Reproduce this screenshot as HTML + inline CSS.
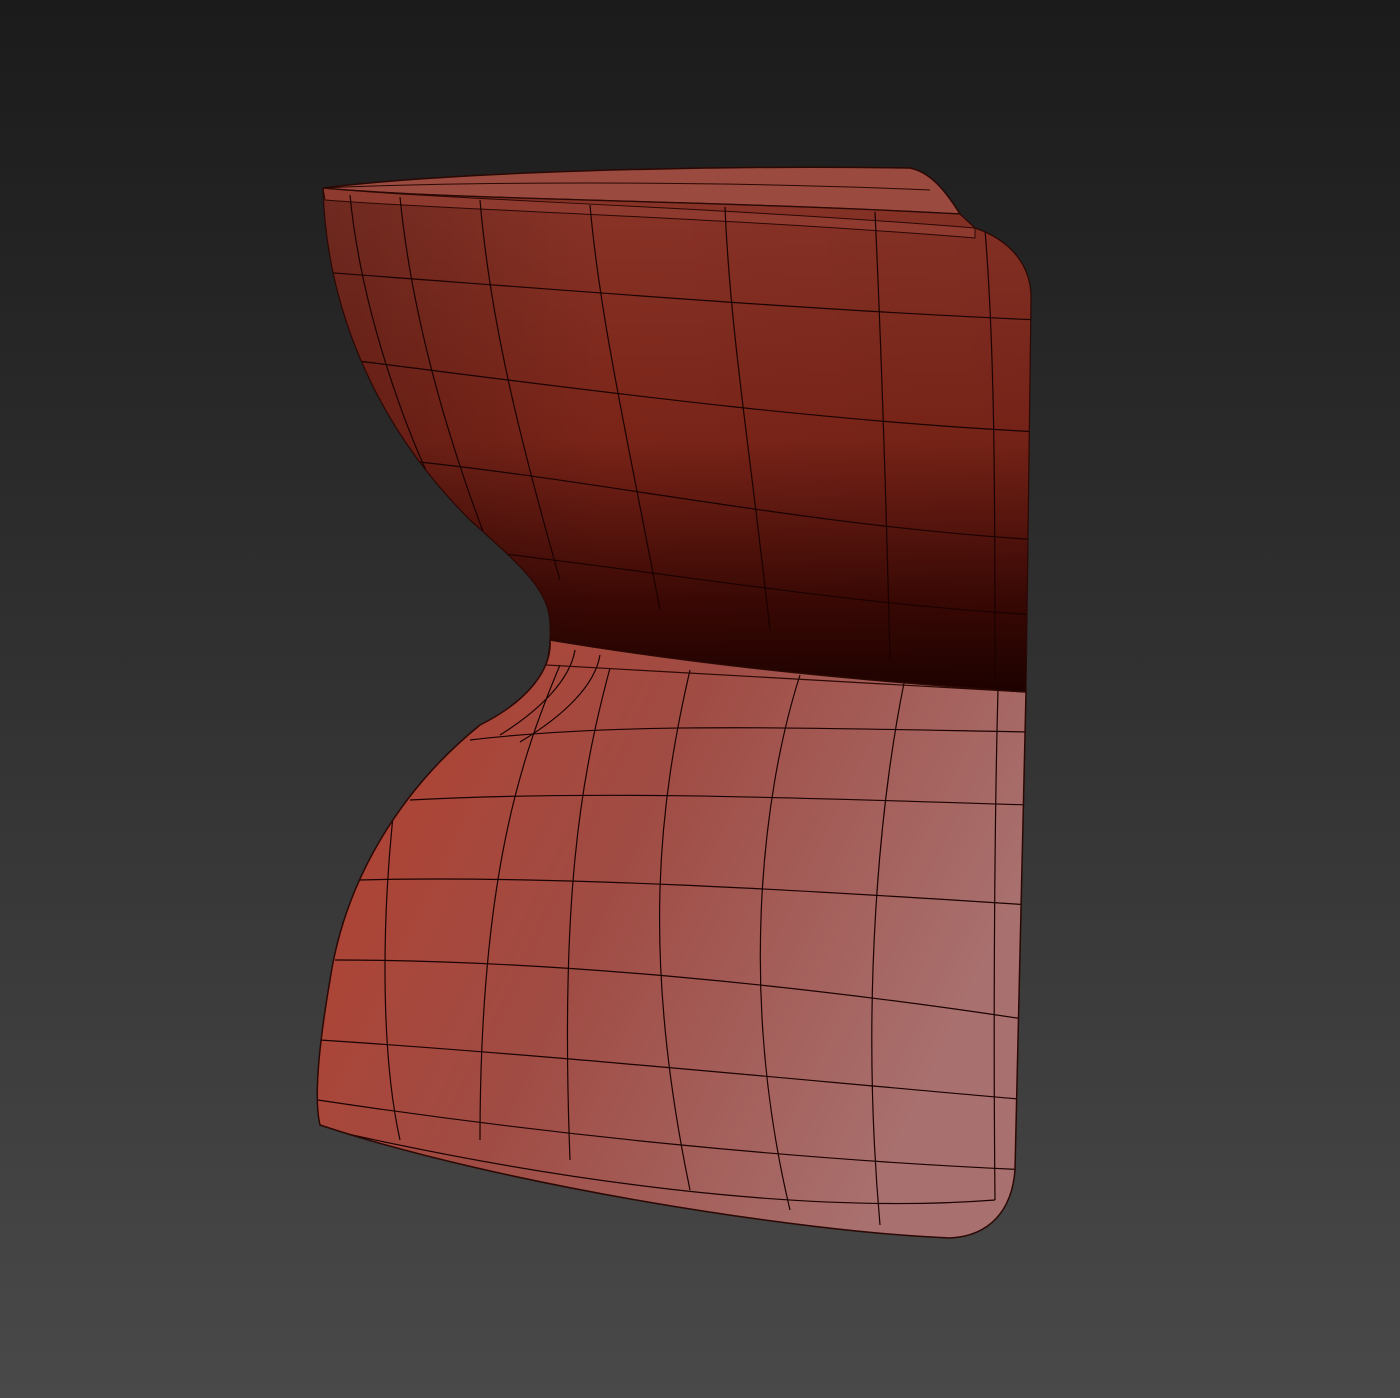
<!DOCTYPE html>
<html><head><style>
html,body{margin:0;padding:0;width:1400px;height:1398px;overflow:hidden;background:#2e2e2e}
svg{display:block}
</style></head><body>
<svg width="1400" height="1398" viewBox="0 0 1400 1398" xmlns="http://www.w3.org/2000/svg">
<defs>
<linearGradient id="bg" x1="0" y1="0" x2="0" y2="1">
<stop offset="0" stop-color="#1b1b1b"/><stop offset="1" stop-color="#494949"/></linearGradient>
<linearGradient id="up" x1="0" y1="0" x2="0" y2="1">
<stop offset="0" stop-color="#8a3428"/><stop offset="0.5" stop-color="#7a2418"/><stop offset="0.82" stop-color="#3a0804"/><stop offset="1" stop-color="#1e0200"/></linearGradient>
<linearGradient id="lo" x1="0" y1="0" x2="1" y2="0.4">
<stop offset="0" stop-color="#b3402e"/><stop offset="0.5" stop-color="#a04c44"/><stop offset="1" stop-color="#a8706e"/></linearGradient>
<linearGradient id="upH" x1="0" y1="0" x2="1" y2="0">
<stop offset="0" stop-color="#000" stop-opacity="0.2"/><stop offset="0.4" stop-color="#000" stop-opacity="0"/><stop offset="1" stop-color="#000" stop-opacity="0.05"/></linearGradient>
<clipPath id="cu"><path id="pu" d="M323,188 C 326,300 370,420 470,520 C 520,565 550,590 550,625 C 551,640 549,655 546,665 L 1026,692 L 1031,300 C 1032,265 1010,240 975,228 L 960,214 C 700,200 450,200 323,188 Z"/></clipPath>
<clipPath id="cl"><path id="pl" d="M550,640 C 552,668 530,700 480,725 C 400,790 345,880 330,980 C 318,1050 314,1100 320,1125 C 500,1185 800,1232 950,1238 C 990,1236 1012,1210 1015,1170 L 1026,692 C 850,680 700,665 550,640 Z"/></clipPath>
</defs>
<rect width="1400" height="1398" fill="url(#bg)"/>
<path d="M323,188 C 450,172 700,165 910,168 C 930,172 945,190 960,214 C 700,200 450,200 323,188 Z" fill="#9a4a3e" stroke="#2a0804" stroke-width="1.5"/>
<path d="M323,188 C 450,182 700,180 930,190" fill="none" stroke="#2a0804" stroke-width="1"/>
<use href="#pu" fill="url(#up)"/>
<use href="#pu" fill="url(#upH)"/>
<path d="M323,188 C 450,200 700,206 975,228 L 975,238 C 700,216 450,210 325,200 Z" fill="#8e3a2e" stroke="#2a0804" stroke-width="1"/>
<use href="#pl" fill="url(#lo)"/>
<g clip-path="url(#cu)" fill="none" stroke="#1a0200" stroke-width="1.2">
<path d="M320,272 C 500,285 800,310 1040,320"/>
<path d="M350,360 C 550,385 800,420 1040,432"/>
<path d="M400,460 C 600,480 800,525 1040,540"/>
<path d="M470,550 C 650,570 850,605 1040,615"/>
<path d="M350,195 C 360,300 400,420 440,500"/>
<path d="M400,197 C 410,300 440,420 490,550"/>
<path d="M480,200 C 490,320 520,440 560,580"/>
<path d="M590,205 C 600,320 630,450 660,610"/>
<path d="M725,207 C 730,330 750,450 770,630"/>
<path d="M875,212 C 880,320 885,450 890,660"/>
<path d="M985,230 C 995,350 995,500 995,690"/>
</g>
<g clip-path="url(#cl)" fill="none" stroke="#1a0200" stroke-width="1.2">
<path d="M470,740 C 620,722 800,728 1030,732"/>
<path d="M410,800 C 600,790 800,798 1030,805"/>
<path d="M360,880 C 550,875 800,890 1030,905"/>
<path d="M335,960 C 550,960 800,985 1030,1020"/>
<path d="M320,1040 C 550,1055 800,1080 1030,1100"/>
<path d="M318,1100 C 550,1135 800,1160 1030,1170"/>
<path d="M330,1130 C 550,1180 800,1215 995,1200"/>
<path d="M560,665 C 520,760 480,880 480,1140"/>
<path d="M610,668 C 580,780 560,900 570,1160"/>
<path d="M690,670 C 660,800 640,950 690,1190"/>
<path d="M800,675 C 760,800 740,1000 790,1210"/>
<path d="M905,678 C 880,800 860,1000 880,1225"/>
<path d="M998,690 C 995,800 993,1000 995,1200"/>
<path d="M400,760 C 380,900 380,1050 400,1140"/>
<path d="M575,650 C 570,680 540,710 500,735"/>
<path d="M600,655 C 595,685 565,715 520,742"/>
</g>
<use href="#pl" fill="none" stroke="#2a0804" stroke-width="1.5"/>
<use href="#pu" fill="none" stroke="#2a0804" stroke-width="1.2"/>
</svg>
</body></html>
